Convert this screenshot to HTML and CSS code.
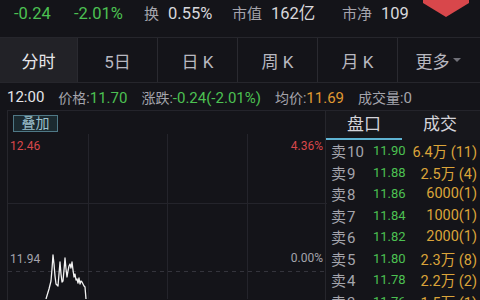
FILE: index.html
```html
<!DOCTYPE html>
<html>
	<head>
		<meta charset="UTF-8" />
		<title>分时</title>
		<link rel="stylesheet" href="styles.css">
	</head>
	<body>
<div class="screen">
  <div class="quote">
    <span class="q-val chg down">-0.24</span>
    <span class="q-val pct down">-2.01%</span>
    <span class="q-item turn"><span class="q-label">换</span>0.55%</span>
    <span class="q-item cap"><span class="q-label">市值</span>162亿</span>
    <span class="q-item"><span class="q-label">市净</span>109</span>
    <svg class="badge" width="46" height="17" viewBox="0 0 46 17">
      <polygon points="0,0 46,0 46,3 23,17 0,3" fill="#d8474b" />
    </svg>
  </div>

  <div class="tabs">
    <div class="tab active">分时</div>
    <div class="tab">5日</div>
    <div class="tab">日 K</div>
    <div class="tab">周 K</div>
    <div class="tab">月 K</div>
    <div class="tab">更多<span class="caret"></span></div>
  </div>

  <div class="info">
    <span class="time">12:00</span>
    <span class="field">价格:<span class="num down">11.70</span></span>
    <span class="field">涨跌:<span class="num down">-0.24(-2.01%)</span></span>
    <span class="field">均价:<span class="num avg">11.69</span></span>
    <span class="field">成交量:<span class="num">0</span></span>
  </div>

  <div class="main">
    <div class="chart">
      <div class="chart-head"><span class="overlay-btn">叠加</span></div>
      <div class="plot">
        <svg class="grid" width="319" height="165" viewBox="0 0 319 165">
          <g stroke="#24242b" stroke-width="1">
            <line x1="80.5" y1="0" x2="80.5" y2="165" />
            <line x1="159.5" y1="0" x2="159.5" y2="165" />
            <line x1="239.5" y1="0" x2="239.5" y2="165" />
            <line x1="0" y1="69.5" x2="319" y2="69.5" />
          </g>
          <line x1="0" y1="137.5" x2="319" y2="137.5" stroke="#34343c" stroke-width="1" stroke-dasharray="4 4" />
          <polyline fill="none" stroke="#f2f2f2" stroke-width="1.3" stroke-linejoin="round"
            points="38,165 41,155 43,147 44,135 45,121 46,130 47,142 48,150 50,152 51,140 52,128 53,140 54,148 55,147 56,136 57,124 58,135 59,143 60,137 61,132 62,130 63,134 64,128 65,136 66,143 67,140 68,146 69,145 70,149 71,144 72,150 73,147 74,148 75,150 76,152 77,153 78,165" />
        </svg>
        <span class="lbl lbl-tl">12.46</span>
        <span class="lbl lbl-tr">4.36%</span>
        <span class="lbl lbl-ml">11.94</span>
        <span class="lbl lbl-mr">0.00%</span>
      </div>
    </div>

    <div class="book">
      <div class="book-tabs">
        <div class="book-tab active">盘口</div>
        <div class="book-tab">成交</div>
      </div>
      <div class="row"><span class="side">卖<span class="lv">10</span></span><span class="price">11.90</span><span class="vol">6.4万 (11)</span></div>
      <div class="row"><span class="side">卖<span class="lv">9</span></span><span class="price">11.88</span><span class="vol">2.5万 (4)</span></div>
      <div class="row"><span class="side">卖<span class="lv">8</span></span><span class="price">11.86</span><span class="vol">6000(1)</span></div>
      <div class="row"><span class="side">卖<span class="lv">7</span></span><span class="price">11.84</span><span class="vol">1000(1)</span></div>
      <div class="row"><span class="side">卖<span class="lv">6</span></span><span class="price">11.82</span><span class="vol">2000(1)</span></div>
      <div class="row"><span class="side">卖<span class="lv">5</span></span><span class="price">11.80</span><span class="vol">2.3万 (8)</span></div>
      <div class="row"><span class="side">卖<span class="lv">4</span></span><span class="price">11.78</span><span class="vol">2.2万 (2)</span></div>
      <div class="row"><span class="side">卖<span class="lv">3</span></span><span class="price">11.76</span><span class="vol">1.5万 (1)</span></div>
    </div>
  </div>
</div>
	</body>
</html>
```

FILE: styles.css
```css
* {
	margin: 0;
	padding: 0;
	box-sizing: border-box;
}

body {
	background-color: #141419;
	font-family: Roboto, "Noto Sans CJK SC", sans-serif;
	color: #d6d6dc;
}

.screen {
	width: 480px;
	height: 300px;
	overflow: hidden;
}

.down {
	color: #4cc152;
}

/* quote strip */
.quote {
	position: relative;
	height: 38px;
	display: flex;
	align-items: flex-start;
	padding: 4px 0 0 14px;
	font-size: 16.5px;
	line-height: 19px;
	border-bottom: 1px solid #26262c;
}

.q-val.chg {
	width: 60px;
}

.q-val.pct {
	width: 70px;
}

.q-item {
	color: #d8d8dc;
}

.q-item.turn {
	width: 88px;
}

.q-item.cap {
	width: 110px;
}

.q-label {
	font-size: 15px;
	color: #a4a4ac;
	margin-right: 9px;
}

.badge {
	position: absolute;
	top: 0;
	left: 423px;
}

/* period tabs */
.tabs {
	display: flex;
	height: 45px;
	border-bottom: 1px solid #26262c;
}

.tab {
	width: 80px;
	display: flex;
	align-items: center;
	justify-content: center;
	font-size: 17px;
	color: #b8b8c0;
	border-right: 1px solid #2a2a30;
}

.tab:first-child {
	width: 78px;
}

.tab:last-child {
	border-right: none;
}

.tab.active {
	background-color: #222227;
	color: #e6e6ea;
}

.caret {
	display: inline-block;
	margin-left: 3px;
	border-left: 4px solid transparent;
	border-right: 4px solid transparent;
	border-top: 4px solid #707078;
}

/* info line */
.info {
	height: 27px;
	display: flex;
	align-items: center;
	padding-left: 7px;
	font-size: 14px;
	color: #a4a4ac;
}

.info .num {
	font-size: 15px;
}

.info .time {
	color: #e4e4e8;
	font-size: 15px;
	margin-right: 14px;
}

.info .field {
	margin-right: 14px;
}

.info .avg {
	color: #e09a32;
}

/* chart + order book */
.main {
	display: flex;
	border-top: 1px solid #24242b;
	margin-left: 7px;
}

.chart {
	width: 319px;
	border-left: 1px solid #26262c;
	border-right: 1px solid #26262c;
}

.chart-head {
	height: 23px;
	padding: 2px 0 0 5px;
}

.overlay-btn {
	display: inline-block;
	width: 45px;
	height: 17px;
	line-height: 15px;
	text-align: center;
	font-size: 14px;
	color: #9cc0cc;
	background-color: #1b2a30;
	border: 1px solid #4f7886;
}

.plot {
	position: relative;
	height: 165px;
}

.grid {
	display: block;
}

.lbl {
	position: absolute;
	font-size: 12px;
	line-height: 14px;
	color: #a4a4ac;
}

.lbl-tl {
	left: 2px;
	top: 5px;
	color: #d8474b;
}

.lbl-tr {
	right: 2px;
	top: 5px;
	color: #d8474b;
}

.lbl-ml {
	left: 2px;
	top: 118px;
}

.lbl-mr {
	right: 2px;
	top: 117px;
}

.book {
	flex: 1;
}

.book-tabs {
	display: flex;
	height: 29px;
	background-color: #17171c;
}

.book-tab {
	width: 76px;
	text-align: center;
	font-size: 17px;
	line-height: 27px;
	color: #d4d4da;
}

.book-tab.active {
	border-bottom: 2px solid #5fb3d2;
}

.row {
	display: flex;
	align-items: center;
	height: 21.5px;
	padding-left: 5px;
}

.side {
	width: 42px;
	font-size: 15px;
	color: #a4a4ac;
}

.side .lv {
	margin-left: 1px;
}

.price {
	width: 36px;
	font-size: 13px;
	color: #4cc152;
}

.vol {
	flex: 1;
	text-align: right;
	padding-right: 3px;
	font-size: 14.5px;
	color: #dba43a;
	white-space: pre;
}
```
